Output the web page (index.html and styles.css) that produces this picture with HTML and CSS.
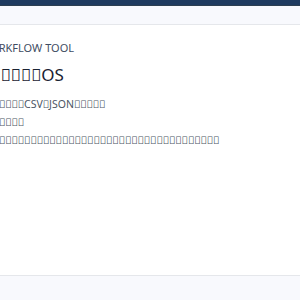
FILE: index.html
```html
<!DOCTYPE html>
<html lang="ja">
<head>
<meta charset="utf-8">
<title>Workflow Tool</title>
<link rel="stylesheet" href="styles.css">
</head>
<body>
<header class="topbar"></header>
<nav class="subbar"></nav>
<main class="stage">
  <section class="intro">
    <p class="eyebrow">WORKFLOW TOOL</p>
    <h1 class="title">&#xE000;&#xE000;&#xE000;&#xE000;&#xE000;&#xE000;OS</h1>
    <p class="line">&#xE000;&#xE000;&#xE000;&#xE000;&#xE000;&#xE000;&#xE000;CSV&#xE000;JSON&#xE000;&#xE000;&#xE000;&#xE000;&#xE000;</p>
    <p class="line">&#xE000;&#xE000;&#xE000;&#xE000;&#xE000;&#xE000;&#xE000;</p>
    <p class="line">&#xE000;&#xE000;&#xE000;&#xE000;&#xE000;&#xE000;&#xE000;&#xE000;&#xE000;&#xE000;&#xE000;&#xE000;&#xE000;&#xE000;&#xE000;&#xE000;&#xE000;&#xE000;&#xE000;&#xE000;&#xE000;&#xE000;&#xE000;&#xE000;&#xE000;&#xE000;&#xE000;&#xE000;&#xE000;&#xE000;&#xE000;&#xE000;&#xE000;&#xE000;&#xE000;&#xE000;&#xE000;&#xE000;</p>
  </section>
</main>
<footer class="footbar"></footer>
</body>
</html>
```
FILE: styles.css
```css
html, body {
  margin: 0;
  padding: 0;
  height: 100%;
}
body {
  font-family: "Noto Sans", sans-serif;
  background: #ffffff;
  display: flex;
  flex-direction: column;
  overflow: hidden;
}
.topbar {
  height: 5px;
  background: #1e3a5f;
  border-bottom: 1px solid #2c3e50;
  flex: none;
}
.subbar {
  height: 18px;
  background: #f8f9fd;
  border-bottom: 1px solid #e5e7eb;
  flex: none;
}
.stage {
  flex: 1;
  display: flex;
  justify-content: center;
}
.intro {
  flex: none;
  width: 340px;
  padding-top: 15px;
}
.eyebrow {
  margin: 0;
  font-size: 11px;
  line-height: 16px;
  color: #3f4d63;
}
.title {
  margin: 7px 0 8px;
  font-size: 17px;
  line-height: 24px;
  font-weight: 400;
  color: #1a2233;
}
.line {
  margin: 0;
  font-size: 10.5px;
  line-height: 18px;
  color: #4b5563;
}
.footbar {
  height: 24px;
  flex: none;
  background: #f8f9fd;
  border-top: 1px solid #e5e7eb;
}
```
